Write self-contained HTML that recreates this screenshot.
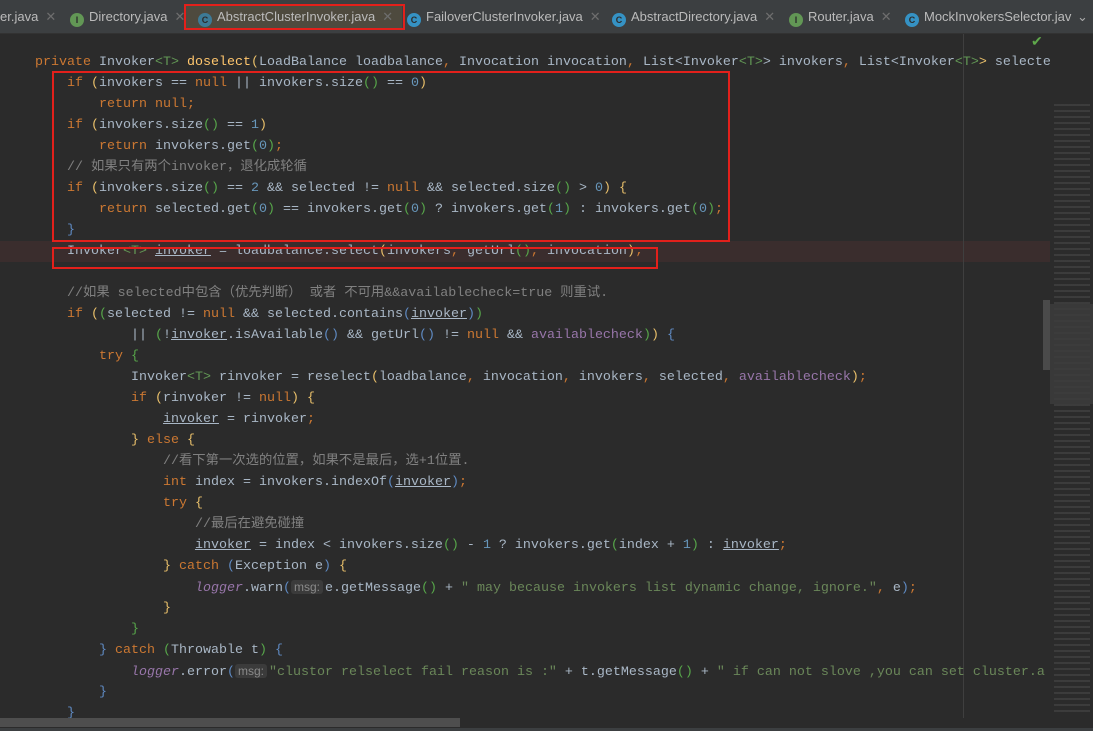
<!DOCTYPE html>
<html><head><meta charset="utf-8"><style>
body{margin:0;width:1093px;height:731px;overflow:hidden;background:#2b2b2b;position:relative;font-family:"Liberation Sans",sans-serif}
.tabs{position:absolute;left:0;top:0;width:1093px;height:33px;background:#3c3f41;border-bottom:1px solid #323232}
.tab{position:absolute;top:5px;height:24px;line-height:24px;font-size:13px;color:#bbbbbb;white-space:nowrap}
.ic{display:inline-block;width:14px;height:14px;border-radius:50%;vertical-align:-2px;margin-right:5px;font-size:9px;line-height:14px;text-align:center;color:#2b2b2b;font-weight:bold}
.x{color:#6e6e6e;margin-left:7px}
.code{position:absolute;left:0;top:52px;font-family:"Liberation Mono","Noto Sans CJK SC",monospace;font-size:13.33px;color:#a9b7c6}
.l{height:21px;line-height:21px;padding-left:35px;white-space:pre;overflow:hidden}
.k{color:#cc7832}.n{color:#6897bb}.s{color:#6a8759}.c{color:#808080}.f{color:#9876aa;font-style:italic}.u{text-decoration:underline}.y{color:#ffc66d}.g{color:#629755}.gb{color:#57a64a}.yb{color:#e8bf6a}.bb{color:#5f8ac2}.pv{color:#9876aa}
.hint{background:#3b3b3b;color:#8a8a8a;border-radius:3px;padding:0 3px;font-family:"Liberation Sans",sans-serif;font-size:12px;margin-right:2px}
.red{position:absolute;border:2px solid #e3201b}
</style></head><body>
<div class="tabs">
<div class="tab" style="left:0">er.java<span class="x">✕</span></div>
<div class="tab" style="left:70px"><span class="ic" style="background:#629755">I</span>Directory.java<span class="x">✕</span></div>
<div class="tab" style="left:186px;width:216px;background:#4e4a3e;padding-left:12px;box-sizing:border-box"><span class="ic" style="background:#3d7a96">C</span>AbstractClusterInvoker.java<span class="x">✕</span></div>
<div class="tab" style="left:407px"><span class="ic" style="background:#3592c4">C</span>FailoverClusterInvoker.java<span class="x">✕</span></div>
<div class="tab" style="left:612px"><span class="ic" style="background:#3592c4">C</span>AbstractDirectory.java<span class="x">✕</span></div>
<div class="tab" style="left:789px"><span class="ic" style="background:#629755">I</span>Router.java<span class="x">✕</span></div>
<div class="tab" style="left:905px"><span class="ic" style="background:#3592c4">C</span>MockInvokersSelector.jav</div>
<div class="tab" style="left:1077px;color:#aaa">⌄</div>
</div>
<div style="position:absolute;left:0;top:241px;width:1050px;height:21px;background:#3a2d2d"></div>
<div style="position:absolute;left:963px;top:34px;width:1px;height:684px;background:#3f3f3f"></div>
<div style="position:absolute;left:1031px;top:33px;color:#5fa84b;font-size:14px">✔</div>
<div class="code">
<div class="l"><span class="k">private </span>Invoker<span class="g">&lt;T&gt;</span> <span class="y">doselect</span><span class="yb">(</span>LoadBalance loadbalance<span class="k">, </span>Invocation invocation<span class="k">, </span>List&lt;Invoker<span class="g">&lt;T&gt;</span>&gt; invokers<span class="k">, </span>List&lt;Invoker<span class="g">&lt;T&gt;</span><span class="yb">&gt;</span> selecte</div>
<div class="l">    <span class="k">if </span><span class="yb">(</span>invokers == <span class="k">null</span> || invokers.size<span class="gb">()</span> == <span class="n">0</span><span class="yb">)</span></div>
<div class="l">        <span class="k">return null;</span></div>
<div class="l">    <span class="k">if </span><span class="yb">(</span>invokers.size<span class="gb">()</span> == <span class="n">1</span><span class="yb">)</span></div>
<div class="l">        <span class="k">return </span>invokers.get<span class="gb">(</span><span class="n">0</span><span class="gb">)</span><span class="k">;</span></div>
<div class="l">    <span class="c">// 如果只有两个invoker，退化成轮循</span></div>
<div class="l">    <span class="k">if </span><span class="yb">(</span>invokers.size<span class="gb">()</span> == <span class="n">2</span> &amp;&amp; selected != <span class="k">null</span> &amp;&amp; selected.size<span class="gb">()</span> &gt; <span class="n">0</span><span class="yb">)</span> <span class="yb">{</span></div>
<div class="l">        <span class="k">return </span>selected.get<span class="gb">(</span><span class="n">0</span><span class="gb">)</span> == invokers.get<span class="gb">(</span><span class="n">0</span><span class="gb">)</span> ? invokers.get<span class="gb">(</span><span class="n">1</span><span class="gb">)</span> : invokers.get<span class="gb">(</span><span class="n">0</span><span class="gb">)</span><span class="k">;</span></div>
<div class="l">    <span class="bb">}</span></div>
<div class="l">    Invoker<span class="g">&lt;T&gt;</span> <span class="u">invoker</span> = loadbalance.select<span class="yb">(</span>invokers<span class="k">, </span>getUrl<span class="gb">()</span><span class="k">, </span>invocation<span class="yb">)</span><span class="k">;</span></div>
<div class="l"> </div>
<div class="l">    <span class="c">//如果 selected中包含（优先判断） 或者 不可用&amp;&amp;availablecheck=true 则重试.</span></div>
<div class="l">    <span class="k">if </span><span class="yb">(</span><span class="gb">(</span>selected != <span class="k">null</span> &amp;&amp; selected.contains<span class="bb">(</span><span class="u">invoker</span><span class="bb">)</span><span class="gb">)</span></div>
<div class="l">            || <span class="gb">(</span>!<span class="u">invoker</span>.isAvailable<span class="bb">()</span> &amp;&amp; getUrl<span class="bb">()</span> != <span class="k">null</span> &amp;&amp; <span class="pv">availablecheck</span><span class="gb">)</span><span class="yb">)</span> <span class="bb">{</span></div>
<div class="l">        <span class="k">try </span><span class="gb">{</span></div>
<div class="l">            Invoker<span class="g">&lt;T&gt;</span> rinvoker = reselect<span class="yb">(</span>loadbalance<span class="k">, </span>invocation<span class="k">, </span>invokers<span class="k">, </span>selected<span class="k">, </span><span class="pv">availablecheck</span><span class="yb">)</span><span class="k">;</span></div>
<div class="l">            <span class="k">if </span><span class="yb">(</span>rinvoker != <span class="k">null</span><span class="yb">)</span> <span class="yb">{</span></div>
<div class="l">                <span class="u">invoker</span> = rinvoker<span class="k">;</span></div>
<div class="l">            <span class="yb">}</span> <span class="k">else </span><span class="yb">{</span></div>
<div class="l">                <span class="c">//看下第一次选的位置，如果不是最后，选+1位置.</span></div>
<div class="l">                <span class="k">int </span>index = invokers.indexOf<span class="bb">(</span><span class="u">invoker</span><span class="bb">)</span><span class="k">;</span></div>
<div class="l">                <span class="k">try </span><span class="yb">{</span></div>
<div class="l">                    <span class="c">//最后在避免碰撞</span></div>
<div class="l">                    <span class="u">invoker</span> = index &lt; invokers.size<span class="gb">()</span> - <span class="n">1</span> ? invokers.get<span class="gb">(</span>index + <span class="n">1</span><span class="gb">)</span> : <span class="u">invoker</span><span class="k">;</span></div>
<div class="l">                <span class="yb">}</span> <span class="k">catch </span><span class="bb">(</span>Exception e<span class="bb">)</span> <span class="yb">{</span></div>
<div class="l">                    <span class="f">logger</span>.warn<span class="bb">(</span><span class="hint">msg:</span>e.getMessage<span class="gb">()</span> + <span class="s">" may because invokers list dynamic change, ignore."</span><span class="k">, </span>e<span class="bb">)</span><span class="k">;</span></div>
<div class="l">                <span class="yb">}</span></div>
<div class="l">            <span class="gb">}</span></div>
<div class="l">        <span class="bb">}</span> <span class="k">catch </span><span class="gb">(</span>Throwable t<span class="gb">)</span> <span class="bb">{</span></div>
<div class="l">            <span class="f">logger</span>.error<span class="bb">(</span><span class="hint">msg:</span><span class="s">"clustor relselect fail reason is :"</span> + t.getMessage<span class="gb">()</span> + <span class="s">" if can not slove ,you can set cluster.a</span></div>
<div class="l">        <span class="bb">}</span></div>
<div class="l">    <span class="bb">}</span></div>
</div>
<div style="position:absolute;left:1050px;top:34px;width:43px;height:684px;background:#2b2b2b;overflow:hidden">
<div style="position:absolute;left:4px;top:70px;width:36px;height:610px;background:repeating-linear-gradient(180deg,#5a5a5a 0 2px,transparent 2px 6px);opacity:.35"></div>
<div style="position:absolute;left:0;top:270px;width:43px;height:100px;background:#3d3d3d;opacity:.8"></div>
</div>
<div style="position:absolute;left:1043px;top:300px;width:7px;height:70px;background:#4a4a4a"></div>
<div style="position:absolute;left:0;top:718px;width:460px;height:9px;background:#4e4e4e"></div>
<div style="position:absolute;left:0;top:728px;width:1093px;height:3px;background:#3c3f41"></div>
<div class="red" style="left:184px;top:4px;width:217px;height:22px"></div>
<div class="red" style="left:52px;top:71px;width:674px;height:167px"></div>
<div class="red" style="left:52px;top:247px;width:602px;height:18px"></div>
</body></html>
